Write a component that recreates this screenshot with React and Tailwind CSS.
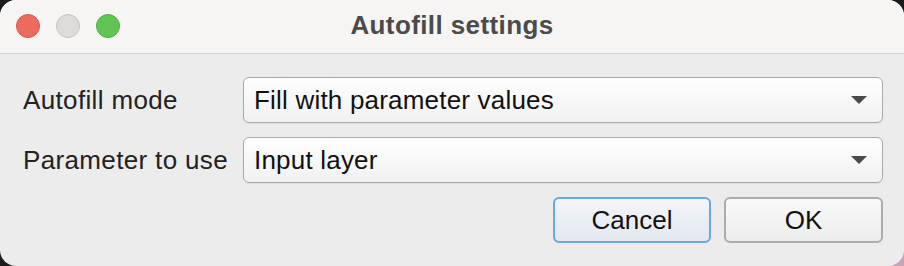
import React from 'react';

const font = { fontFamily: '"Liberation Sans", Arial, sans-serif' };

const Combo = ({ value }) => (
  <div className="flex-1 h-[46px] flex items-center justify-between pl-[10px] pr-[15px] rounded-[6px] border border-[#a9a9a9] bg-gradient-to-b from-[#fefefe] to-[#f1f1f1] shadow-[0_1px_0_rgba(0,0,0,0.05)]">
    <span className="text-[26px] tracking-[0.2px] text-[#111] leading-none">{value}</span>
    <svg width="16" height="8" viewBox="0 0 16 8">
      <path d="M0 0 L16 0 L8 8 Z" fill="#4a4a4a" />
    </svg>
  </div>
);

const Row = ({ label, value }) => (
  <div className="flex items-center">
    <div className="w-[220px] text-[26px] tracking-[0.35px] text-[#222] leading-none">{label}</div>
    <Combo value={value} />
  </div>
);

export default function App() {
  return (
    <div className="relative w-[904px] h-[266px] bg-[#1c1c1c] overflow-hidden" style={font}>
      {/* desktop bit showing at the bottom-right corner */}
      <div className="absolute right-0 bottom-0 w-[40px] h-[40px] bg-[#c9a3b6]" />
      <div className="relative w-full h-full rounded-[16px] overflow-hidden bg-[#ececec] flex flex-col">
        {/* title bar */}
        <div className="relative h-[54px] shrink-0 bg-[#f6f5f4] border-b border-[#d3d3d3] flex items-center justify-center">
          <div className="absolute left-[16px] top-[14px] flex gap-[16px]">
            <div className="w-[24px] h-[24px] rounded-full bg-[#ec6a5e] border border-[#d5584c]" />
            <div className="w-[24px] h-[24px] rounded-full bg-[#dddcdb] border border-[#c3c2c1]" />
            <div className="w-[24px] h-[24px] rounded-full bg-[#61c554] border border-[#50ad43]" />
          </div>
          <span className="text-[26px] font-bold tracking-[0.4px] text-[#4b4b4b] leading-none -mt-[4px]">Autofill settings</span>
        </div>

        {/* body */}
        <div className="flex flex-col gap-[14px] pt-[23px] pl-[23px] pr-[21px]">
          <Row label="Autofill mode" value="Fill with parameter values" />
          <Row label="Parameter to use" value="Input layer" />
          <div className="flex justify-end gap-[13px]">
            <button className="w-[158px] h-[46px] rounded-[6px] border-2 border-[#6aa6ea] bg-gradient-to-b from-[#f3f6fa] to-[#e3e8ef] text-[26px] text-[#111] leading-none">
              Cancel
            </button>
            <button className="w-[159px] h-[46px] rounded-[6px] border-2 border-[#acacac] bg-gradient-to-b from-[#fafafa] to-[#ececec] text-[26px] text-[#111] leading-none">
              OK
            </button>
          </div>
        </div>
      </div>
    </div>
  );
}
